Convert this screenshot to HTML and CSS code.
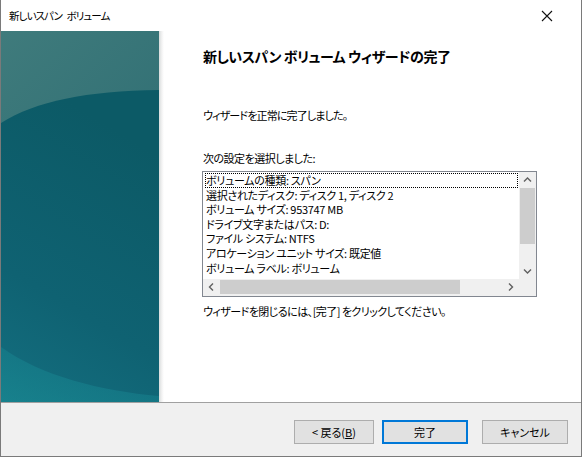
FILE: index.html
```html
<!DOCTYPE html>
<html lang="ja">
<head>
<meta charset="utf-8">
<title>新しいスパン ボリューム</title>
<link rel="stylesheet" href="styles.css">
</head>
<body>
<div class="window">
  <div class="titlebar">
    <span class="title">新しいスパン ボリューム</span>
    <svg class="close" width="12" height="12" viewBox="0 0 12 12"><path d="M1 1L11 11M11 1L1 11" stroke="#111" stroke-width="1.1" fill="none"/></svg>
  </div>
  <div class="main">
    <div class="side">
      <svg width="158" height="371" viewBox="0 0 158 371" preserveAspectRatio="none">
        <defs>
          <linearGradient id="top" x1="0" y1="0" x2="0.4" y2="1">
            <stop offset="0" stop-color="#3f7b7c"/>
            <stop offset="1" stop-color="#296970"/>
          </linearGradient>
          <linearGradient id="low" x1="0.3" y1="0" x2="0" y2="1">
            <stop offset="0" stop-color="#0c5a66"/>
            <stop offset="0.6" stop-color="#0f6272"/>
            <stop offset="1" stop-color="#146f80"/>
          </linearGradient>
          <linearGradient id="corner" x1="0" y1="1" x2="1" y2="0">
            <stop offset="0" stop-color="#1a8d95"/>
            <stop offset="1" stop-color="#137384"/>
          </linearGradient>
        </defs>
        <rect width="158" height="371" fill="url(#top)"/>
        <path d="M0 92 C35 70 85 60 158 59 L158 371 L0 371 Z" fill="url(#low)"/>
        <path d="M0 316 C40 345 100 360 158 365 L158 371 L0 371 Z" fill="url(#corner)" opacity="0.6"/>
      </svg>
    </div>
    <div class="shadow"></div>
    <div class="content">
      <h1 class="heading">新しいスパン ボリューム ウィザードの完了</h1>
      <p class="msg">ウィザードを正常に完了しました。</p>
      <p class="label">次の設定を選択しました:</p>
      <div class="listbox">
        <div class="items">
          <div class="item focus">ボリュームの種類: スパン</div>
          <div class="item">選択されたディスク: ディスク 1, ディスク 2</div>
          <div class="item">ボリューム サイズ: 953747 MB</div>
          <div class="item">ドライブ文字またはパス: D:</div>
          <div class="item">ファイル システム: NTFS</div>
          <div class="item">アロケーション ユニット サイズ: 既定値</div>
          <div class="item">ボリューム ラベル: ボリューム</div>
        </div>
        <div class="vscroll">
          <svg class="arrow" width="17" height="16" viewBox="0 0 17 16"><path d="M5 9.5L8.5 6L12 9.5" stroke="#606060" stroke-width="1.4" fill="none"/></svg>
          <div class="vtrack"><div class="vthumb"></div></div>
          <svg class="arrow" width="17" height="16" viewBox="0 0 17 16"><path d="M5 6.5L8.5 10L12 6.5" stroke="#606060" stroke-width="1.4" fill="none"/></svg>
        </div>
        <div class="hscroll">
          <svg class="arrow" width="17" height="16" viewBox="0 0 17 16"><path d="M10 4.5L6.5 8L10 11.5" stroke="#606060" stroke-width="1.4" fill="none"/></svg>
          <div class="htrack"><div class="hthumb"></div></div>
          <svg class="arrow" width="17" height="16" viewBox="0 0 17 16"><path d="M7 4.5L10.5 8L7 11.5" stroke="#606060" stroke-width="1.4" fill="none"/></svg>
        </div>
        <div class="corner"></div>
      </div>
      <p class="hint">ウィザードを閉じるには、[完了] をクリックしてください。</p>
    </div>
  </div>
  <div class="footer">
    <button class="btn">&lt; 戻る(<u>B</u>)</button>
    <button class="btn default">完了</button>
    <button class="btn cancel">キャンセル</button>
  </div>
</div>
</body>
</html>
```
FILE: styles.css
```css
* { box-sizing: border-box; }
html, body { margin: 0; padding: 0; background: #fff; }
body {
  font-family: "Noto Sans CJK JP", "Noto Sans", sans-serif;
  font-feature-settings: "palt";
  font-size: 11px;
  color: #000;
}
.window {
  width: 582px;
  height: 457px;
  border: 1px solid #7a7a7a;
  border-top: none;
  display: flex;
  flex-direction: column;
  background: #fff;
}
.titlebar {
  height: 31px;
  display: flex;
  align-items: center;
  justify-content: space-between;
  padding: 0 28px 0 8px;
}
.title { font-size: 10.5px; letter-spacing: -0.9px; word-spacing: 3px; }
.close { display: block; }
.main {
  height: 371px;
  display: flex;
}
.side { width: 158px; height: 371px; }
.side svg { display: block; }
.shadow {
  width: 5px;
  background: linear-gradient(to right, #d8dcdc, #f4f4f4 60%, #fff);
}
.content {
  flex: 1;
  padding-left: 39px;
}
.heading {
  margin: 15px 0 0 0;
  font-size: 14px;
  font-weight: bold;
  line-height: 20px;
  letter-spacing: -0.45px;
}
.msg { margin: 41px 0 0 0; line-height: 16px; letter-spacing: -0.85px; }
.label { margin: 27px 0 0 0; line-height: 16px; letter-spacing: -0.5px; }
.listbox {
  margin-top: 5px;
  margin-left: -1px;
  width: 335px;
  height: 126px;
  border: 1px solid #828790;
  display: grid;
  grid-template-columns: 1fr 17px;
  grid-template-rows: 1fr 17px;
}
.items { padding: 1px 0 0 2px; overflow: hidden; }
.item { height: 14.6px; line-height: 14.6px; white-space: nowrap; padding-left: 1px; letter-spacing: -0.3px; }
.item.focus { outline: 1px dotted #000; outline-offset: -1px; margin-right: 1px; }
.vscroll {
  background: #f0f0f0;
  display: flex;
  flex-direction: column;
}
.vtrack { flex: 1; padding: 0 1px; }
.vthumb { height: 56px; background: #cdcdcd; }
.hscroll {
  background: #f0f0f0;
  display: flex;
}
.htrack { flex: 1; padding: 1px 0; }
.hthumb { width: 240px; height: 14px; background: #cdcdcd; }
.corner { background: #f0f0f0; }
.arrow { display: block; flex: none; }
.hint { margin: 6px 0 0 0; line-height: 16px; letter-spacing: -0.55px; }
.footer {
  flex: 1;
  background: #f0f0f0;
  border-top: 1px solid #a0a0a0;
  display: flex;
  justify-content: flex-end;
  align-items: flex-start;
  padding: 17px 13px 0 0;
  gap: 8px;
}
.btn {
  font-family: inherit;
  font-feature-settings: "palt";
  font-size: 11px;
  width: 80px;
  height: 24px;
  border: 1px solid #adadad;
  background: #e1e1e1;
  color: #000;
  padding: 0;
  margin: 0;
}
.btn.default { width: 86px; border: 2px solid #0078d7; }
.btn.cancel { width: 86px; margin-left: 6px; }
```
